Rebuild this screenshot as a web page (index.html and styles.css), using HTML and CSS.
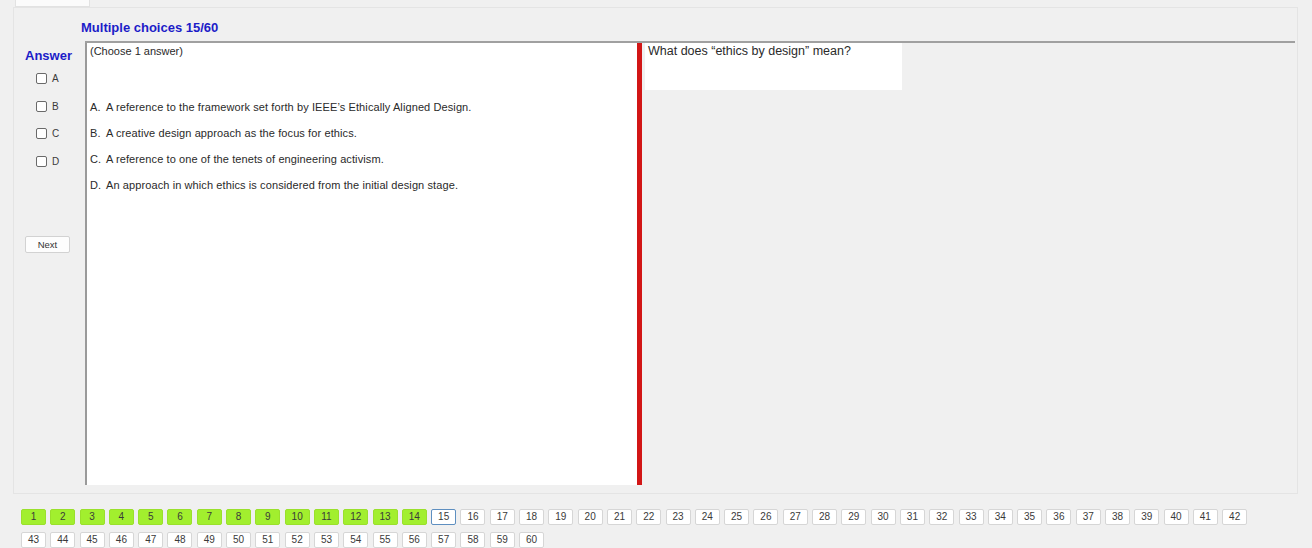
FILE: index.html
```html
<!DOCTYPE html>
<html lang="en">
<head>
<meta charset="utf-8">
<title>Multiple choices 15/60</title>
<link rel="stylesheet" href="styles.css">
</head>
<body>
<div class="tabstrip"><div class="tab"></div></div>
<div class="panel">
  <div class="title">Multiple choices 15/60</div>
  <div class="main">
    <div class="answer-col">
      <div class="answer-label">Answer</div>
      <label class="opt"><span class="box"></span><span class="letter">A</span></label>
      <label class="opt"><span class="box"></span><span class="letter">B</span></label>
      <label class="opt"><span class="box"></span><span class="letter">C</span></label>
      <label class="opt"><span class="box"></span><span class="letter">D</span></label>
      <button class="next">Next</button>
    </div>
    <div class="work">
      <div class="textbox">
        <div class="choose">(Choose 1 answer)</div>
        <div class="options">
          <div class="line"><span class="k">A.</span>A reference to the framework set forth by IEEE’s Ethically Aligned Design.</div>
          <div class="line"><span class="k">B.</span>A creative design approach as the focus for ethics.</div>
          <div class="line"><span class="k">C.</span>A reference to one of the tenets of engineering activism.</div>
          <div class="line"><span class="k">D.</span>An approach in which ethics is considered from the initial design stage.</div>
        </div>
      </div>
      <div class="divider"></div>
      <div class="right">
        <div class="question">What does “ethics by design” mean?</div>
      </div>
    </div>
  </div>
</div>
<div class="nav">
  <span class="q done">1</span><span class="q done">2</span><span class="q done">3</span><span class="q done">4</span><span class="q done">5</span><span class="q done">6</span><span class="q done">7</span><span class="q done">8</span><span class="q done">9</span><span class="q done">10</span><span class="q done">11</span><span class="q done">12</span><span class="q done">13</span><span class="q done">14</span><span class="q current">15</span><span class="q">16</span><span class="q">17</span><span class="q">18</span><span class="q">19</span><span class="q">20</span><span class="q">21</span><span class="q">22</span><span class="q">23</span><span class="q">24</span><span class="q">25</span><span class="q">26</span><span class="q">27</span><span class="q">28</span><span class="q">29</span><span class="q">30</span><span class="q">31</span><span class="q">32</span><span class="q">33</span><span class="q">34</span><span class="q">35</span><span class="q">36</span><span class="q">37</span><span class="q">38</span><span class="q">39</span><span class="q">40</span><span class="q">41</span><span class="q">42</span>
  <span class="q">43</span><span class="q">44</span><span class="q">45</span><span class="q">46</span><span class="q">47</span><span class="q">48</span><span class="q">49</span><span class="q">50</span><span class="q">51</span><span class="q">52</span><span class="q">53</span><span class="q">54</span><span class="q">55</span><span class="q">56</span><span class="q">57</span><span class="q">58</span><span class="q">59</span><span class="q">60</span>
</div>
</body>
</html>
```

FILE: styles.css
```css
* { box-sizing: border-box; }
html, body { margin: 0; padding: 0; }
body {
  width: 1312px;
  height: 548px;
  overflow: hidden;
  background: #f0f0f0;
  font-family: "Liberation Sans", Arial, sans-serif;
  color: #1e1e1e;
}
.tabstrip { height: 7px; padding-left: 15px; }
.tab {
  width: 75px;
  height: 7px;
  background: #fbfbfb;
  border: 1px solid #e2e2e2;
  border-top: none;
}
.panel {
  margin-left: 13px;
  width: 1285px;
  height: 487px;
  border: 1px solid #e4e4e4;
  background: #f0f0f0;
  display: flex;
  flex-direction: column;
}
.title {
  height: 33px;
  padding: 12px 0 0 67px;
  font-size: 13px;
  line-height: 16px;
  font-weight: bold;
  color: #1c1cc8;
}
.main { display: flex; }
.answer-col {
  width: 71px;
  padding: 7px 0 0 11px;
  display: flex;
  flex-direction: column;
  align-items: flex-start;
}
.answer-label {
  font-size: 13px;
  line-height: 16px;
  font-weight: bold;
  color: #1c1cc8;
  margin-bottom: 1px;
}
.opt {
  height: 27.5px;
  display: flex;
  align-items: center;
  padding-left: 11px;
  font-size: 10px;
  color: #3a3a3a;
}
.box {
  width: 11px;
  height: 11px;
  border: 1px solid #6a6a6a;
  border-radius: 2px;
  background: #fff;
  margin-right: 5px;
}
.next {
  margin-top: 61px;
  width: 45px;
  height: 17px;
  padding: 0;
  border: 1px solid #d2d2d2;
  border-radius: 2px;
  background: #fdfdfd;
  font-family: "Liberation Sans", Arial, sans-serif;
  font-size: 9.5px;
  color: #333;
}
.work {
  width: 1210px;
  height: 444px;
  border-top: 2px solid #a0a0a0;
  display: flex;
}
.textbox {
  width: 552px;
  background: #fff;
  border-left: 2px solid #9a9a9a;
  padding: 2px 0 0 3px;
  font-size: 11px;
  color: #2a2a2a;
}
.choose { line-height: 13px; }
.options { margin-top: 36px; letter-spacing: 0.1px; }
.line { height: 26px; line-height: 26px; white-space: nowrap; }
.k { display: inline-block; width: 16px; }
.divider { width: 5px; background: #d21616; }
.right { flex: 1; padding-left: 3px; }
.question {
  width: 257px;
  height: 47px;
  background: #fff;
  padding: 1px 0 0 3px;
  font-size: 12.5px;
  line-height: 15px;
  color: #2a2a2a;
}
.nav {
  margin: 15px 0 0 21px;
  display: grid;
  grid-template-columns: repeat(42, 25px);
  column-gap: 4.3px;
  row-gap: 7px;
}
.q {
  height: 16px;
  border: 1px solid #d6d6d6;
  border-radius: 2px;
  background: #fff;
  font-size: 10px;
  line-height: 14px;
  text-align: center;
  color: #3a3a3a;
}
.q.done { background: #a2ef2e; border-color: #9ae02c; }
.q.current { border: 1.5px solid #5e8fc0; line-height: 13px; }
```
